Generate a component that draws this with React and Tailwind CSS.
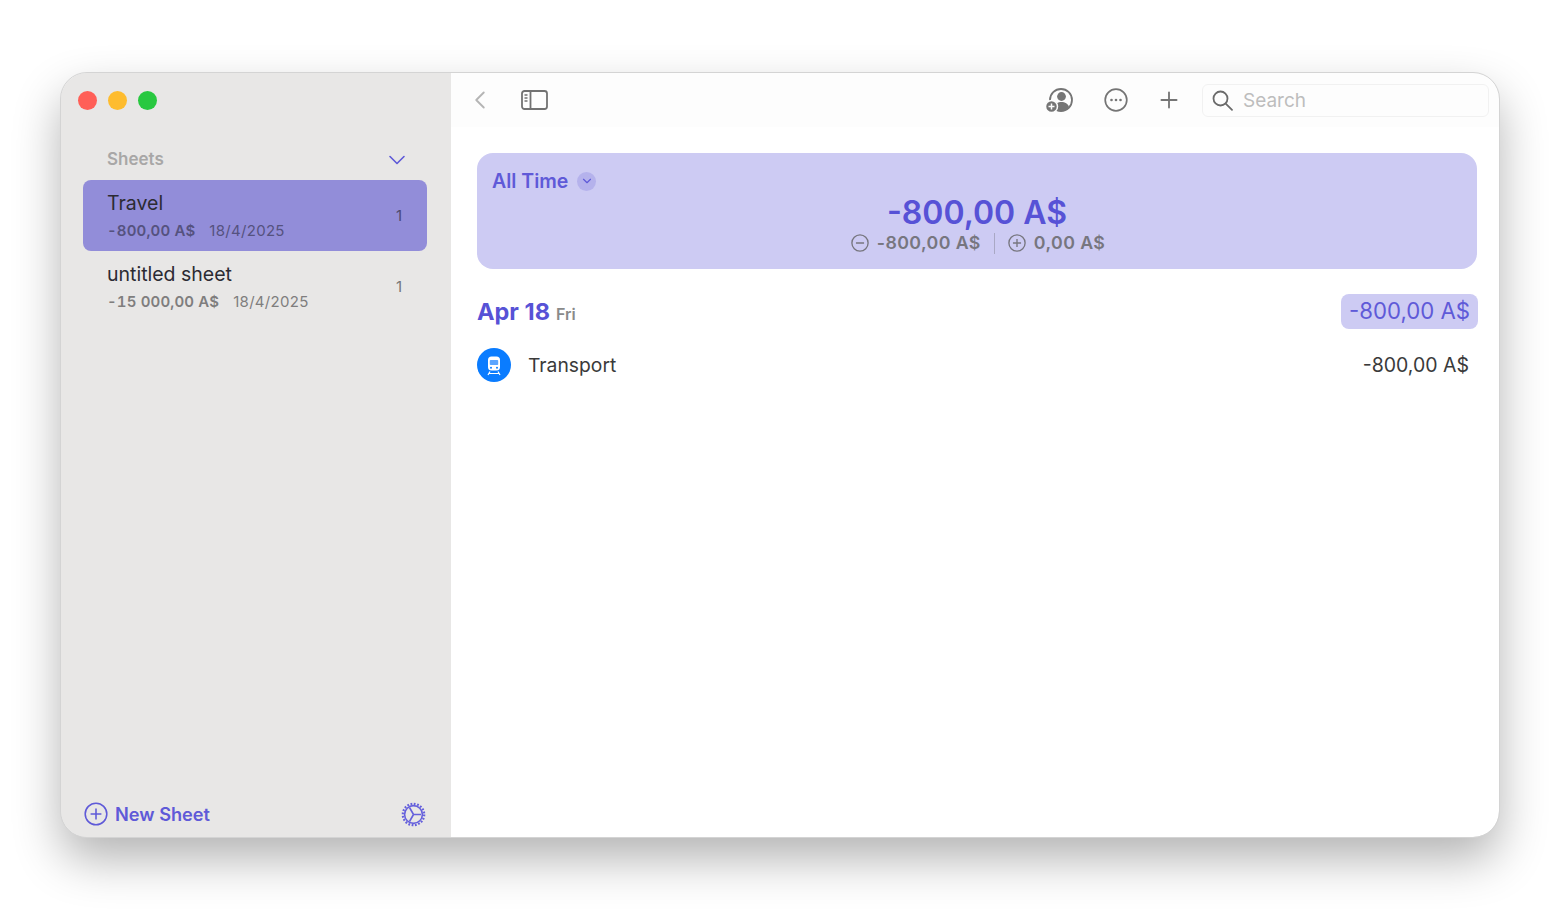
import { ChevronDown, ChevronLeft, Plus } from "lucide-react";

const font = { fontFamily: "Inter, sans-serif" };

// sidebar toggle icon from the toolbar
const SidebarIcon = () => (
  <svg width="27" height="20" viewBox="0 0 27 20" fill="none" stroke="#727272">
    <rect x="1" y="1" width="25" height="18" rx="2.5" strokeWidth="1.8" />
    <path d="M9.500 1v18" strokeWidth="1.8" />
    <path d="M3.500 5h3M3.500 8h3M3.500 11h3" strokeWidth="1.4" />
  </svg>
);

const ShareIcon = () => (
  <svg width="29" height="25" viewBox="0 0 29 25">
    <circle cx="16" cy="12" r="11" fill="none" stroke="#757575" strokeWidth="1.8" />
    <circle cx="16.500" cy="8.500" r="4.400" fill="#757575" />
    <path d="M9 20c1-4.500 4-6 7.500-6s6.500 1.500 7.500 5c-2 2.500-4.500 4-8 4-2.500 0-5-1-7-3z" fill="#757575" />
    <circle cx="6.500" cy="18.500" r="6" fill="#757575" stroke="#fdfdfd" strokeWidth="1.500" />
    <path d="M3.500 18.500h6M6.500 15.500v6" stroke="#fdfdfd" strokeWidth="1.500" />
  </svg>
);

const MoreIcon = () => (
  <svg width="24" height="24" viewBox="0 0 24 24">
    <circle cx="12" cy="12" r="10.800" fill="none" stroke="#757575" strokeWidth="1.700" />
    <circle cx="7.500" cy="12" r="1.300" fill="#757575" />
    <circle cx="12" cy="12" r="1.300" fill="#757575" />
    <circle cx="16.500" cy="12" r="1.300" fill="#757575" />
  </svg>
);

const SearchIcon = () => (
  <svg width="21" height="21" viewBox="0 0 21 21" fill="none" stroke="#6b6b6b" strokeWidth="1.800" strokeLinecap="round">
    <circle cx="8.500" cy="8.500" r="7" />
    <path d="M13.700 13.700L20 19.800" />
  </svg>
);

const CircleSign = ({ size = 20, color = "#77767f", plus = false, width = 1.500 }) => (
  <svg width={size} height={size} viewBox="0 0 20 20" fill="none" stroke={color} strokeWidth={width}>
    <circle cx="10" cy="10" r="9" />
    <path d="M5.500 10h9" />
    {plus && <path d="M10 5.500v9" />}
  </svg>
);

const SettingsIcon = () => (
  <svg width="25" height="25" viewBox="0 0 25 25" fill="none" stroke="#6560dc">
    <circle cx="12.500" cy="12.500" r="10.700" strokeWidth="2.200" strokeDasharray="1.800 1.560" />
    <circle cx="12.500" cy="12.500" r="8.900" strokeWidth="1.600" />
    <path d="M12.500 12.500L20 12.500M12.500 12.500L8.500 5.500M12.500 12.500L8.500 19.500" strokeWidth="1.600" />
  </svg>
);

const TrainIcon = () => (
  <svg width="18" height="21" viewBox="0 0 18 21" fill="none">
    <rect x="3" y="1.500" width="12" height="14" rx="3.500" fill="#fff" />
    <rect x="4.800" y="5" width="8.400" height="5" rx="0.800" fill="#5aa5ff" />
    <circle cx="6" cy="12.700" r="1" fill="#0a7cff" />
    <circle cx="12" cy="12.700" r="1" fill="#0a7cff" />
    <path d="M5 16.500L3 20M13 16.500L15 20M4.200 18.500h9.600" stroke="#fff" strokeWidth="1.200" />
  </svg>
);

const SheetRow = ({ name, amount, date, active }) => (
  <div
    className={`flex h-[71px] items-center justify-between rounded-lg pl-6 pr-[25px] ${
      active ? "bg-[#928dd9]" : ""
    }`}
  >
    <div className="flex flex-col">
      <span className="text-[19.500px] leading-[26px] text-[#2c2b33]">{name}</span>
      <div
        className={`mt-[5px] flex gap-[14px] text-[15px] leading-[20px] ${
          active ? "text-[#55527f]" : "text-[#7f7e7e]"
        }`}
      >
        <span className="font-semibold tracking-[0.15px] tabular-nums">{amount}</span>
        <span className="tracking-[0.3px]">{date}</span>
      </div>
    </div>
    <span className={`pt-px text-[15px] ${active ? "text-[#4c4a70]" : "text-[#767676]"}`}>1</span>
  </div>
);

const Sidebar = () => (
  <div className="flex w-[390px] shrink-0 flex-col bg-[#e8e7e6]">
    <div className="flex gap-[11px] pl-[17px] pt-[18px]">
      <span className="h-[19px] w-[19px] rounded-full bg-[#ff5f57]" />
      <span className="h-[19px] w-[19px] rounded-full bg-[#febc2e]" />
      <span className="h-[19px] w-[19px] rounded-full bg-[#28c840]" />
    </div>
    <div className="mt-[37px] flex h-[24px] items-center justify-between pl-[46px] pr-[40px]">
      <span className="pt-[2px] text-[17px] font-semibold text-[#a8a7a7]">Sheets</span>
      <ChevronDown className="mt-[2px]" size={28} color="#5f5ad8" strokeWidth={1.400} />
    </div>
    <div className="mt-[9px] flex flex-col pl-[22px] pr-[24px]">
      <SheetRow name="Travel" amount="-800,00 A$" date="18/4/2025" active />
      <SheetRow name="untitled sheet" amount="-15 000,00 A$" date="18/4/2025" />
    </div>
    <div className="mt-auto flex items-center justify-between pb-[9px] pl-[23px] pr-[25px]">
      <div className="flex items-center gap-[7px]">
        <CircleSign size={24} color="#5f5ad8" plus width={1.300} />
        <span className="text-[18.200px] font-semibold text-[#5f5ad8]">New Sheet</span>
      </div>
      <SettingsIcon />
    </div>
  </div>
);

const Toolbar = () => (
  <div className="flex h-[54px] shrink-0 items-center bg-[#fdfdfd] pl-[14px] pr-[10px]">
    <ChevronLeft size={30} color="#b5b5b5" strokeWidth={1.500} />
    <div className="ml-[26px]">
      <SidebarIcon />
    </div>
    <div className="ml-auto flex items-center">
      <ShareIcon />
      <div className="ml-[30px]">
        <MoreIcon />
      </div>
      <Plus className="ml-[28px]" size={26} color="#757575" strokeWidth={1.700} />
      <div className="ml-[20px] flex h-[33px] w-[287px] items-center rounded-md border border-[#f1f1f1] bg-[#fdfdfd] pl-[9px]">
        <SearchIcon />
        <span className="ml-[10px] pt-[2px] text-[19px] text-[#bdbdbd]">Search</span>
      </div>
    </div>
  </div>
);

const Summary = () => (
  <div className="relative mr-px flex h-[116px] flex-col items-center rounded-2xl bg-[#cdcbf3] pt-[41px]">
    <div className="absolute left-[15px] top-[15px] flex items-center gap-[9px]">
      <span className="text-[19.500px] font-semibold leading-[26px] text-[#5f5ad8]">All Time</span>
      <span className="flex h-[19px] w-[19px] items-center justify-center rounded-full bg-[#b5b2ec]">
        <ChevronDown size={14} color="#5f5ad8" strokeWidth={2} />
      </span>
    </div>
    <span className="text-[32px] font-semibold leading-[37px] text-[#5752d6]">-800,00 A$</span>
    <div className="flex h-[24px] items-center pl-[2px] text-[17.800px] font-semibold tracking-[0.4px] text-[#77767f]">
      <CircleSign size={18} />
      <span className="ml-[8px]">-800,00 A$</span>
      <span className="mx-[13px] h-[21px] w-px bg-[#a9a8c4]" />
      <CircleSign size={18} plus />
      <span className="ml-[8px]">0,00 A$</span>
    </div>
  </div>
);

const App = () => (
  <div className="h-[918px] w-[1560px] overflow-hidden bg-white pl-[61px] pt-[73px]" style={font}>
    <div className="flex h-[764px] w-[1438px] overflow-hidden rounded-[26px] bg-white shadow-[0_22px_48px_rgba(0,0,0,0.3)] outline outline-[#d4d4d4]">
      <Sidebar />
      <div className="flex flex-1 flex-col">
        <Toolbar />
        <div className="flex flex-col pl-[26px] pr-[21px] pt-[26px]">
          <Summary />
          <div className="mt-[25px] flex h-[35px] items-center justify-between">
            <div className="flex items-baseline gap-[6px] pt-px">
              <span className="text-[23.500px] font-bold text-[#5752d6]">Apr 18</span>
              <span className="text-[16px] font-semibold text-[#8a8a8a]">Fri</span>
            </div>
            <span className="flex h-[35px] items-center rounded-lg bg-[#cdcbf3] px-[8px] pb-px text-[22.200px] text-[#5f5ad8]">
              -800,00 A$
            </span>
          </div>
          <div className="mt-[19px] flex h-[34px] items-center justify-between pr-[9px]">
            <div className="flex items-center">
              <span className="flex h-[34px] w-[34px] items-center justify-center rounded-full bg-[#0a7cff]">
                <TrainIcon />
              </span>
              <span className="ml-[17px] text-[19.300px] text-[#3a3a3a]">Transport</span>
            </div>
            <span className="pt-px text-[19.500px] text-[#3a3a3a]">-800,00 A$</span>
          </div>
        </div>
      </div>
    </div>
  </div>
);

export default App;
